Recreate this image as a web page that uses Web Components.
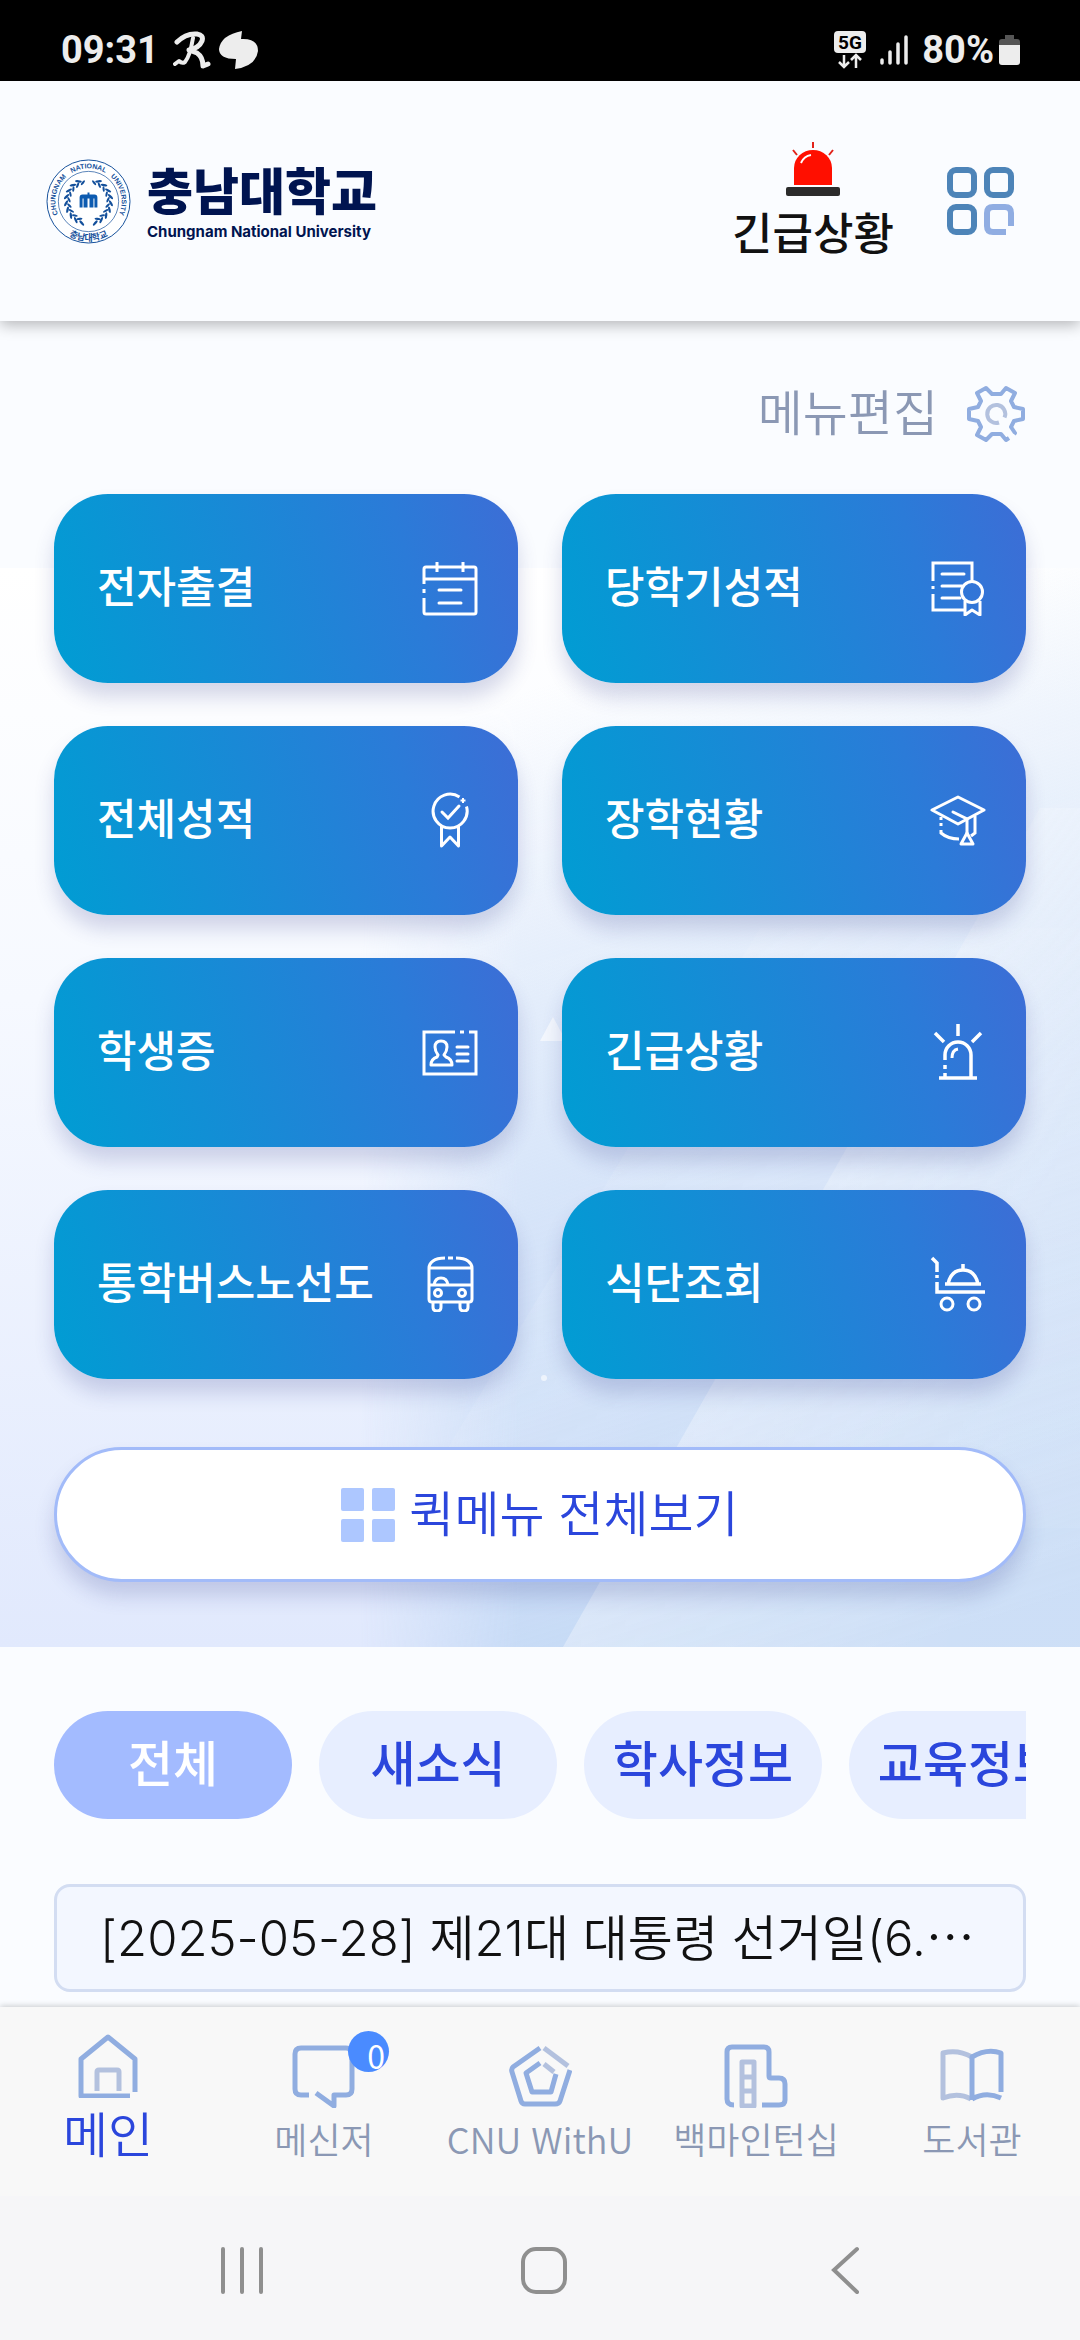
<!DOCTYPE html>
<html lang="ko">
<head>
<meta charset="UTF-8">
<meta name="viewport" content="width=device-width, initial-scale=1.0">
<title>충남대학교</title>
<style>
    * {
        box-sizing: border-box;
    }

    body {
        margin: 0;
        min-height: 100vh;
        display: flex;
        flex-direction: column;
        background: #fafcff;
        color: #111;
        font-family: "Noto Sans CJK KR", "Noto Sans", sans-serif;
    }

    main {
        flex: 1;
    }

    .more {
        font-family: "Noto Sans CJK KR", sans-serif;
    }
</style>
</head>
<body>
    <status-bar></status-bar>
    <app-header></app-header>
    <main>
        <quick-menu>
            <quick-card icon="calendar">전자출결</quick-card>
            <quick-card icon="report">당학기성적</quick-card>
            <quick-card icon="medal">전체성적</quick-card>
            <quick-card icon="gradcap">장학현황</quick-card>
            <quick-card icon="idcard">학생증</quick-card>
            <quick-card icon="siren">긴급상황</quick-card>
            <quick-card icon="bus">통학버스노선도</quick-card>
            <quick-card icon="meal">식단조회</quick-card>
        </quick-menu>
        <news-board>
            <news-tab slot="tabs" active>전체</news-tab>
            <news-tab slot="tabs">새소식</news-tab>
            <news-tab slot="tabs">학사정보</news-tab>
            <news-tab slot="tabs">교육정보</news-tab>
            <notice-item>[2025-05-28] 제21대 대통령 선거일(6.<span class="more">…</span></notice-item>
        </news-board>
    </main>
    <tab-bar>
        <tab-item icon="home" active>메인</tab-item>
        <tab-item icon="message" badge="0">메신저</tab-item>
        <tab-item icon="pentagon">CNU WithU</tab-item>
        <tab-item icon="building">백마인턴십</tab-item>
        <tab-item icon="book">도서관</tab-item>
    </tab-bar>
    <system-nav></system-nav>

<script>
// Line icons of the quick menu, 56x56
const CARD_ICONS = {
    calendar: `
        <path d="M2 24V9q0-2 2-2h48q2 0 2 2v43q0 2-2 2H4q-2 0-2-2V38"/>
        <path d="M2 29v4M2 19h52M15 2v10M41 2v10"/>
        <path d="M17 30h22M17 43h22" stroke-linecap="round"/>`,
    report: `
        <path d="M3 21V3h39v18M3 26v3M3 34v16h31"/>
        <path d="M12 14h22M12 26h20M12 38h18" stroke-linecap="round"/>
        <circle cx="42" cy="32" r="10.5"/>
        <path d="M35 41v14l7-5 8 5V41" stroke-linejoin="round"/>`,
    medal: `
        <path d="M37.5 4.9A17 17 0 1 0 44.5 14.5"/>
        <path d="M20 20l6 6 11-12" stroke-linecap="round"/>
        <path d="M19.5 34v20l8.5-9 8.5 9V34" stroke-linejoin="round"/>
        <path d="M41 6v5M38.5 8.5h5" stroke-width="2"/>`,
    gradcap: `
        <path d="M2 18L28 5l26 13-26 14z" stroke-linejoin="round"/>
        <path d="M23 20l14 7v14" stroke-linecap="round"/>
        <path d="M11 25v3M11 31v3M11 38v3q7 6 18 6M45 24v17l-4 3"/>
        <path d="M37 41l-6 11h12z" stroke-linejoin="round"/>`,
    idcard: `
        <path d="M33 8H2v42h52V8h-7M38 8h4"/>
        <path d="M35 23h11M35 30h11M35 37h11" stroke-linecap="round"/>
        <path d="M16 31q-3-4-3-8 0-6 6-6t6 6q0 4-3 8l2 2q6 2 6 8H9q0-6 6-8z" stroke-linejoin="round"/>`,
    siren: `
        <path d="M9 54h38M15 36v-5a13 13 0 0 1 26 0v23M15 41v4M15 49v4" stroke-width="3.5"/>
        <path d="M28 0v12M5 9l9 9M51 9l-9 9" stroke-width="3.5"/>
        <path d="M22 34q0-8 6-9"/>`,
    bus: `
        <path d="M23 2q-8 0-12 3-4 3-4 7v31q0 3 3 3h37q3 0 3-3V12q0-4-4-7-4-3-12-3M26 2h5M7 12h43M7 29h43"/>
        <path d="M12 29q1-7 7-7t7 7"/>
        <circle cx="16" cy="37" r="3.5"/>
        <circle cx="40" cy="37" r="3.5"/>
        <path d="M11 47v4q0 4 4 4t4-4v-4M38 47v4q0 4 4 4t4-4v-4"/>`,
    meal: `
        <path d="M2 2l5 5v9M7 19v3M7 26v10h48" stroke-width="3.5"/>
        <path d="M15 28h36M18 28q3-14 15-14t15 14M33 14V8" stroke-width="3.5"/>
        <circle cx="17" cy="48" r="6"/>
        <circle cx="44" cy="48" r="6"/>`
};

// Two-tone icons of the bottom tab bar, 64x64
const TAB_ICONS = {
    home: `
        <path d="M59 58V25L32 3 5 25v37h49"/>
        <path class="soft" d="M21 57V38q0-2 2-2h18q2 0 2 2v19"/>`,
    message: `
        <path d="M17 51H9q-6 0-6-6V10q0-6 6-6h45q6 0 6 6v35q0 6-6 6H42v11L24 49"/>`,
    pentagon: `
        <path d="M32 4L5 23q-2 2-1 5l9 29q1 3 4 3h30q4 0 5-3l10-31"/>
        <path class="soft" d="M36 4l24 18"/>
        <path d="M32 19L18 29l6 19h19l5-18"/>
        <path class="soft" d="M36 20l10 8"/>`,
    building: `
        <path d="M10 61q-7 0-7-6V8q0-5 5-5h32q5 0 5 5v24q0 2 2 2h8q6 0 6 6v16q0 5-6 5H38"/>
        <path class="soft" d="M18 18h12v44H18zM18 33h12M18 47h12"/>`,
    book: `
        <path class="soft" d="M32 13Q18 5 3 9v45q15-6 28 1"/>
        <path d="M32 56V13q15-9 29-4v39M32 55q14-8 29-1"/>`
};

const RESET = `
    *, *::before, *::after { box-sizing: border-box; }
    svg { display: block; flex: none; }
    a { color: inherit; text-decoration: none; }
    button { margin: 0; padding: 0; border: 0; background: none; color: inherit; font: inherit; cursor: pointer; }
`;

// Attaches an open shadow root filled with the given markup
class BaseElement extends HTMLElement {
    connectedCallback() {
        if (this.shadowRoot) return;
        this.attachShadow({ mode: 'open' });
        this.shadowRoot.innerHTML = `<style>${RESET}${this.styles()}</style>${this.markup()}`;
    }
}

class StatusBar extends BaseElement {
    styles() {
        return `
            :host {
                display: flex;
                align-items: center;
                justify-content: space-between;
                height: 81px;
                padding: 19px 60px 0 61px;
                background: #000;
                color: #ededed;
                font: 700 38px/44px Roboto, sans-serif;
            }
            .group { display: flex; align-items: center; }
            .left { gap: 8px; }
            .time { margin-right: 6px; }
            .right { gap: 14px; }
            .battery { display: flex; align-items: center; gap: 5px; }
        `;
    }

    markup() {
        return `
            <div class="group left">
                <span class="time">09:31</span>
                <svg width="38" height="38" viewBox="0 0 38 38" fill="none" stroke="#ededed" stroke-width="5" stroke-linecap="round" stroke-linejoin="round">
                    <path d="M4 11Q13 2 24 3q7 1 5 7-3 7-13 9l8 3q6 4 6 13l5-2"/>
                    <path d="M20 7q-3 18-8 24-3 2-6-1l-4 3" stroke-width="4"/>
                </svg>
                <svg width="40" height="38" viewBox="0 0 40 38" fill="#ededed">
                    <path d="M23 0l-1 8q17-1 17 12Q37 35 16 38l1-10Q0 28 0 18 2 4 23 0z"/>
                </svg>
            </div>
            <div class="group right">
                <svg width="32" height="38" viewBox="0 0 32 38">
                    <rect width="32" height="22" rx="4" fill="#ededed"/>
                    <text x="16" y="18" text-anchor="middle" fill="#000" font-family="Roboto, sans-serif" font-size="19" font-weight="700">5G</text>
                    <path d="M10 24v12M5 31l5 5 5-5M22 37V24M17 29l5-5 5 5" fill="none" stroke="#ededed" stroke-width="2.5"/>
                </svg>
                <svg width="28" height="30" viewBox="0 0 28 30" fill="none" stroke="#ededed" stroke-width="3.5" stroke-linecap="round">
                    <path d="M2 25v3M10 17v11M18 9v19M26 2v26"/>
                </svg>
                <span class="battery">80%
                    <svg width="21" height="32" viewBox="0 0 21 32">
                        <path d="M6 1h9v4h3q3 0 3 3v4H0V8q0-3 3-3h3z" fill="#555"/>
                        <path d="M0 11h21v17q0 3-3 3H3q-3 0-3-3z" fill="#ededed"/>
                    </svg>
                </span>
            </div>
        `;
    }
}

class UniversitySeal extends BaseElement {
    styles() {
        return `
            :host { display: block; flex: none; }
            text { font: 700 7px "Liberation Sans", Arial, sans-serif; }
            .ko { font: 700 9px "Noto Sans CJK KR", sans-serif; }
        `;
    }

    // Laurel leaves on both sides of the gate
    leaves() {
        let out = '';
        for (let i = 0; i < 9; i++) {
            const deg = 22 + i * 17;
            for (const side of [1, -1]) {
                out += `<g transform="rotate(${side * (180 - deg)})">
                    <ellipse cx="${side * 2}" cy="-25" rx="1.2" ry="3.4" transform="rotate(${side * 62} 0 -24)"/>
                    <ellipse cx="${side * 2}" cy="-20" rx="1.1" ry="3" transform="rotate(${side * 118} 0 -21)"/>
                </g>`;
            }
        }
        return out;
    }

    markup() {
        return `
            <svg width="85" height="85" viewBox="-43 -43 86 86" fill="#14509b" role="img" aria-label="충남대학교">
                <circle r="42" fill="#fff" stroke="#14509b"/>
                <circle r="30.5" fill="none" stroke="#14509b" stroke-width="0.7"/>
                <path id="top" d="M0 33.5A33.5 33.5 0 0 1 0-33.5 33.5 33.5 0 0 1 0 33.5" fill="none"/>
                <path id="bottom" d="M-40 0A40 40 0 0 0 40 0" fill="none"/>
                <text text-anchor="middle"><textPath href="#top" startOffset="28.5%">CHUNGNAM</textPath></text>
                <text text-anchor="middle"><textPath href="#top" startOffset="50%">NATIONAL</textPath></text>
                <text text-anchor="middle"><textPath href="#top" startOffset="71.5%">UNIVERSITY</textPath></text>
                <text class="ko" text-anchor="middle"><textPath href="#bottom" startOffset="50%">충남대학교</textPath></text>
                ${this.leaves()}
                <path d="M-9 6V-4q0-3 3-3h5v-2h2v2h5q3 0 3 3V6H6V-3H5V6H1V-3h-2V6h-4V-3h-1V6z" fill="#0d5bb0"/>
            </svg>
        `;
    }
}

class AppHeader extends BaseElement {
    styles() {
        return `
            :host {
                display: flex;
                align-items: center;
                justify-content: space-between;
                height: 240px;
                padding: 0 66px 0 46px;
                background: #fafcff;
                box-shadow: 0 4px 14px rgba(0, 0, 0, 0.28);
                position: relative;
                z-index: 1;
            }
            .brand { display: flex; align-items: center; gap: 16px; color: #001450; }
            .name { display: flex; flex-direction: column; gap: 2px; white-space: nowrap; }
            .ko { font-size: 50px; font-weight: 900; line-height: 60px; }
            .en { font: 700 15px/24px Inter, "Liberation Sans", sans-serif; }
            .actions { display: flex; align-items: center; gap: 53px; }
            .emergency {
                display: flex;
                flex-direction: column;
                align-items: center;
                gap: 9px;
                padding-bottom: 4px;
                font-size: 44px;
                font-weight: 500;
                line-height: 52px;
            }
        `;
    }

    markup() {
        return `
            <a class="brand" href="#home">
                <university-seal></university-seal>
                <span class="name">
                    <span class="ko">충남대학교</span>
                    <span class="en">Chungnam National University</span>
                </span>
            </a>
            <div class="actions">
                <button class="emergency" type="button">
                    <svg width="54" height="54" viewBox="0 0 54 54">
                        <path d="M8 43V26a19 18 0 0 1 38 0v17z" fill="#ff0f00"/>
                        <path d="M15 21q3-7 10-8" fill="none" stroke="#fff" stroke-width="2"/>
                        <path d="M27 0v6M7 8l4 5M47 8l-4 5" stroke="#e2231a" stroke-width="2"/>
                        <rect y="45" width="54" height="9" rx="2" fill="#2b2b2b"/>
                    </svg>
                    <span>긴급상황</span>
                </button>
                <button type="button" aria-label="메뉴">
                    <svg width="67" height="68" viewBox="0 0 67 68" fill="none" stroke="#4d84b8" stroke-width="6">
                        <rect x="3" y="3" width="24" height="25" rx="6"/>
                        <rect x="40" y="3" width="24" height="25" rx="6"/>
                        <rect x="3" y="40" width="24" height="25" rx="6"/>
                        <path d="M64 59V46q0-6-6-6H46q-6 0-6 6v13q0 6 6 6h13" stroke="#90ade2"/>
                    </svg>
                </button>
            </div>
        `;
    }
}

class QuickCard extends BaseElement {
    styles() {
        return `
            :host { display: block; }
            a {
                display: flex;
                align-items: center;
                justify-content: space-between;
                height: 189px;
                padding: 0 40px 2px 43px;
                border-radius: 54px;
                background: linear-gradient(75deg, #009dd3, #2b7bd8 75%, #3d6dd6);
                box-shadow: 0 14px 20px rgba(50, 60, 140, 0.2);
                color: #fff;
                font-size: 43px;
                font-weight: 500;
                line-height: 60px;
                white-space: nowrap;
            }
            .label { padding-bottom: 8px; }
        `;
    }

    markup() {
        return `
            <a href="#${this.getAttribute('icon')}">
                <span class="label"><slot></slot></span>
                <svg width="56" height="56" viewBox="0 0 56 56" fill="none" stroke="#fff" stroke-width="3">${CARD_ICONS[this.getAttribute('icon')]}</svg>
            </a>
        `;
    }
}

class QuickMenu extends BaseElement {
    styles() {
        return `
            :host {
                display: block;
                position: relative;
                padding: 63px 54px 65px;
            }
            .backdrop {
                position: absolute;
                left: 0;
                top: 247px;
                width: 100%;
                height: calc(100% - 247px);
            }
            .content { position: relative; display: flex; flex-direction: column; }
            .label { padding-bottom: 8px; }
            .edit {
                display: flex;
                align-items: center;
                align-self: flex-end;
                gap: 28px;
                height: 60px;
                margin-bottom: 50px;
                color: #8b98b4;
                font-size: 49px;
                font-weight: 350;
                line-height: 60px;
            }
            .cards {
                display: grid;
                grid-template-columns: 1fr 1fr;
                gap: 43px 44px;
                margin-bottom: 68px;
            }
            .all {
                display: flex;
                align-items: center;
                justify-content: center;
                gap: 14px;
                height: 135px;
                border: 3px solid #a2bbf9;
                border-radius: 68px;
                background: #fff;
                box-shadow: 0 14px 20px rgba(50, 60, 140, 0.2);
                color: #2b46dc;
                font-size: 49px;
                font-weight: 350;
                line-height: 60px;
            }
        `;
    }

    markup() {
        return `
            <svg class="backdrop" viewBox="0 0 1080 1079" preserveAspectRatio="none">
                <defs>
                    <linearGradient id="base" x2="0" y2="1">
                        <stop offset="0" stop-color="#fff"/>
                        <stop offset="0.4" stop-color="#f6f9ff"/>
                        <stop offset="1" stop-color="#e1e9fd"/>
                    </linearGradient>
                    <linearGradient id="blue" gradientUnits="userSpaceOnUse" x1="600" y1="100" x2="900" y2="1079">
                        <stop offset="0" stop-color="#c2d8f4" stop-opacity="0"/>
                        <stop offset="0.5" stop-color="#c9dcf6" stop-opacity="0.65"/>
                        <stop offset="1" stop-color="#c4d9f5"/>
                    </linearGradient>
                    <linearGradient id="fade" gradientUnits="userSpaceOnUse" x1="360" y1="1000" x2="520" y2="1000">
                        <stop offset="0" stop-color="#000"/>
                        <stop offset="1" stop-color="#fff"/>
                    </linearGradient>
                    <mask id="edge"><rect width="1080" height="1079" fill="url(#fade)"/></mask>
                    <linearGradient id="facet" x2="1" y2="0.3">
                        <stop offset="0" stop-color="#fff" stop-opacity="0.4"/>
                        <stop offset="1" stop-color="#fff" stop-opacity="0.15"/>
                    </linearGradient>
                </defs>
                <rect width="1080" height="1079" fill="url(#base)"/>
                <g mask="url(#edge)">
                    <rect width="1080" height="1079" fill="url(#blue)"/>
                    <path d="M400 960L760 360 1080 360 1080 960z" fill="url(#facet)" opacity="0.3"/>
                    <path d="M563 1079L1040 240 1080 240V1079z" fill="url(#facet)"/>
                </g>
                <path d="M553 449l-13 24h26z" fill="#fff" opacity="0.6"/>
                <circle cx="544" cy="810" r="3" fill="#fff" opacity="0.6"/>
            </svg>
            <div class="content">
                <button class="edit" type="button">
                    <span class="label">메뉴편집</span>
                    <svg width="60" height="60" viewBox="0 0 60 60" fill="none" stroke="#90ade0" stroke-width="4" stroke-linejoin="round">
                        <path d="M48 50l1-1-4-6 3-6 9-2V25l-9-2-3-6 4-8-9-5-5 6h-9l-6-6-9 5 4 8-3 6-9 2v10l9 2 3 6-4 8 9 5 6-6h9l5 6 3-2"/>
                        <path d="M33 38.5A9 9 0 1 1 38.5 33.5" stroke="#b3c1de"/>
                    </svg>
                </button>
                <div class="cards"><slot></slot></div>
                <button class="all" type="button">
                    <svg width="54" height="54" viewBox="0 0 54 54" fill="#adc7ff">
                        <rect width="23" height="23" rx="2"/>
                        <rect x="31" width="23" height="23" rx="2"/>
                        <rect y="31" width="23" height="23" rx="2"/>
                        <rect x="31" y="31" width="23" height="23" rx="2"/>
                    </svg>
                    <span class="label">퀵메뉴 전체보기</span>
                </button>
            </div>
        `;
    }
}

class NewsTab extends BaseElement {
    styles() {
        return `
            :host { display: block; flex: none; width: 238px; }
            button {
                width: 100%;
                height: 108px;
                padding-bottom: 8px;
                border-radius: 54px;
                background: #e7eeff;
                color: #2b46dc;
                font-size: 49px;
                font-weight: 500;
                line-height: 60px;
                white-space: nowrap;
            }
            :host([active]) button { background: #a3bbff; color: #fff; }
        `;
    }

    markup() {
        return `<button type="button"><slot></slot></button>`;
    }
}

class NoticeItem extends BaseElement {
    styles() {
        return `
            :host { display: block; }
            a {
                display: block;
                height: 108px;
                padding: 18px 43px 24px;
                border: 3px solid #d3ddf2;
                border-radius: 16px;
                background: #f3f7ff;
                font-family: Inter, "Noto Sans CJK KR", sans-serif;
                font-size: 49px;
                font-weight: 350;
                line-height: 60px;
                white-space: nowrap;
                overflow: hidden;
            }
        `;
    }

    markup() {
        return `<a href="#notice"><slot></slot></a>`;
    }
}

class NewsBoard extends BaseElement {
    styles() {
        return `
            :host {
                display: flex;
                flex-direction: column;
                gap: 65px;
                padding: 64px 54px 15px;
                background: #fafcff;
            }
            .tabs { display: flex; gap: 27px; overflow: hidden; }
        `;
    }

    markup() {
        return `
            <div class="tabs"><slot name="tabs"></slot></div>
            <slot></slot>
        `;
    }
}

class TabItem extends BaseElement {
    styles() {
        return `
            :host { display: block; min-width: 0; }
            a {
                display: flex;
                flex-direction: column;
                align-items: center;
                gap: 8px;
                color: #8b98b4;
                font-size: 36px;
                font-weight: 350;
                line-height: 44px;
                white-space: nowrap;
            }
            :host([active]) a {
                gap: 4px;
                padding-bottom: 8px;
                color: #2b46dc;
                font-size: 49px;
                line-height: 60px;
            }
            .icon { position: relative; }
            .soft { stroke: #b3c1de; }
            .badge {
                position: absolute;
                left: 56px;
                top: -13px;
                width: 41px;
                height: 41px;
                padding: 4px 4px 0 0;
                border-radius: 50%;
                background: #4a8bff;
                color: #fff;
                font-size: 32px;
                font-weight: 400;
                line-height: 41px;
                text-align: right;
            }
        `;
    }

    markup() {
        const icon = this.getAttribute('icon');
        const badge = this.getAttribute('badge');
        return `
            <a href="#${icon}">
                <span class="icon">
                    <svg width="64" height="64" viewBox="0 0 64 64" fill="none" stroke="#90ade0" stroke-width="5" stroke-linejoin="round">${TAB_ICONS[icon]}</svg>
                    ${badge !== null ? `<span class="badge">${badge}</span>` : ''}
                </span>
                <span><slot></slot></span>
            </a>
        `;
    }
}

class TabBar extends BaseElement {
    styles() {
        return `
            :host {
                display: grid;
                grid-template-columns: repeat(5, 1fr);
                align-items: center;
                height: 189px;
                background: #f8f8f8;
                box-shadow: 0 -1px 6px rgba(0, 0, 0, 0.2);
                position: relative;
            }
        `;
    }

    markup() {
        return `<slot></slot>`;
    }
}

class SystemNav extends BaseElement {
    styles() {
        return `
            :host {
                display: grid;
                grid-template-columns: repeat(3, 1fr);
                align-items: center;
                height: 144px;
                padding: 4px 83px 0 91px;
                background: #f6f6f8;
                position: relative;
            }
            button { justify-self: center; }
        `;
    }

    markup() {
        const icon = (label, shape) => `
            <button type="button" aria-label="${label}">
                <svg width="48" height="48" viewBox="0 0 48 48" fill="none" stroke="#8f8f8f" stroke-width="4" stroke-linecap="round">${shape}</svg>
            </button>`;
        return icon('최근 앱', '<path d="M5 3v43M24 3v43M43 3v43"/>')
            + icon('홈', '<rect x="3" y="3" width="42" height="43" rx="13"/>')
            + icon('뒤로', '<path d="M35 3L12 24l23 22"/>');
    }
}

customElements.define('status-bar', StatusBar);
customElements.define('university-seal', UniversitySeal);
customElements.define('app-header', AppHeader);
customElements.define('quick-card', QuickCard);
customElements.define('quick-menu', QuickMenu);
customElements.define('news-tab', NewsTab);
customElements.define('notice-item', NoticeItem);
customElements.define('news-board', NewsBoard);
customElements.define('tab-item', TabItem);
customElements.define('tab-bar', TabBar);
customElements.define('system-nav', SystemNav);
</script>
</body>
</html>
